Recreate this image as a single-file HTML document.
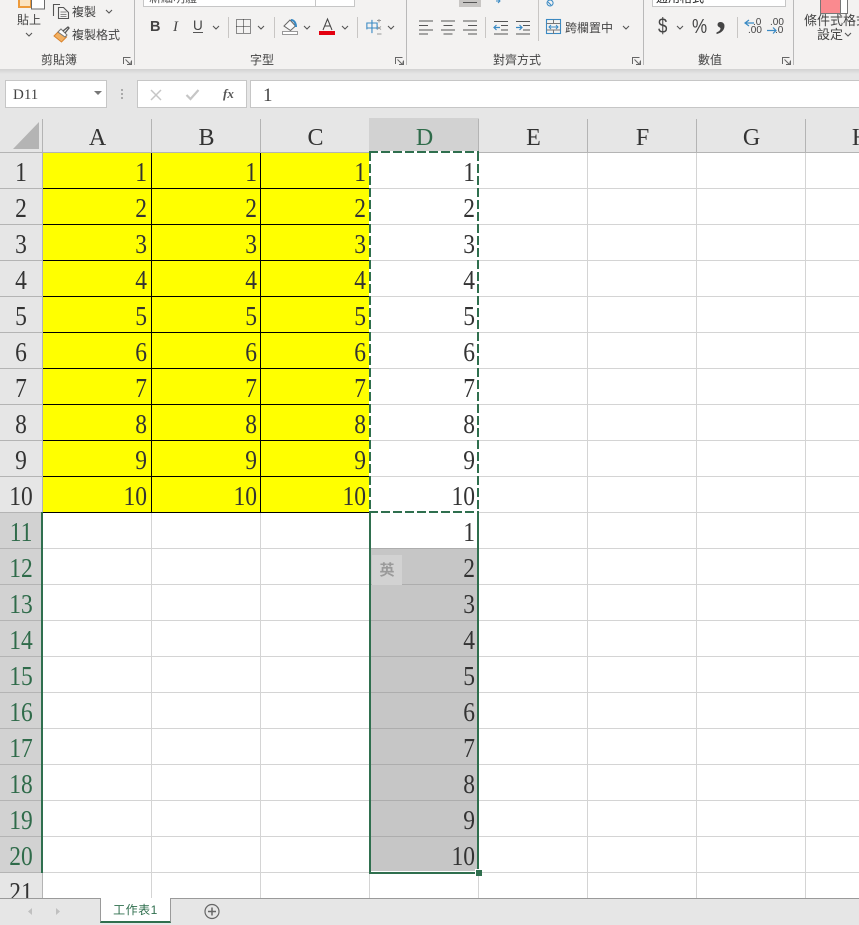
<!DOCTYPE html>
<html><head><meta charset="utf-8"><style>
html,body{margin:0;padding:0;width:859px;height:925px;overflow:hidden;background:#fff}
*{box-sizing:border-box}
.a{position:absolute}
#root{position:relative;width:859px;height:925px;overflow:hidden;font-family:"Liberation Sans","Noto Sans CJK TC",sans-serif;color:#444}
.t{position:absolute;font-size:12px;line-height:14px;white-space:nowrap;color:#444}
.col{position:absolute;top:152px;font:27px/36px "Liberation Serif",serif;text-align:right;color:#333;padding-top:2px;transform:scaleX(.87);transform-origin:100% 0}
.rh{transform-origin:50% 0}
.hd{position:absolute;top:119px;height:33px;text-align:center;font:24px/38px "Liberation Serif",serif;color:#333;width:109px}
.sep{position:absolute;width:1px;background:#c8c6c4}
svg{position:absolute;overflow:visible}
</style></head><body><div id="root">

<!-- ribbon -->
<div class="a" style="left:0;top:0;width:859px;height:69px;background:#f3f2f1"></div>
<div class="a" style="left:0;top:69px;width:859px;height:49px;background:#e6e6e6"></div>
<div class="a" style="left:0;top:69px;width:859px;height:5px;background:linear-gradient(#d2d2d2,#e6e6e6)"></div>

<div class="sep" style="left:134px;top:0;height:65px;background:#b9b9b9"></div>
<div class="sep" style="left:406px;top:0;height:65px;background:#b9b9b9"></div>
<div class="sep" style="left:643px;top:0;height:65px;background:#b9b9b9"></div>
<div class="sep" style="left:793px;top:0;height:65px;background:#b9b9b9"></div>
<div class="sep" style="left:228px;top:17px;height:21px"></div>
<div class="sep" style="left:274px;top:17px;height:21px"></div>
<div class="sep" style="left:357px;top:17px;height:21px"></div>
<div class="sep" style="left:485px;top:17px;height:21px"></div>
<div class="sep" style="left:538px;top:0;height:41px"></div>
<div class="sep" style="left:737px;top:17px;height:21px"></div>

<!-- paste / clipboard -->
<svg style="left:0;top:0" width="140" height="50" fill="none">
<path d="M19 -2V7H31V-2Z" stroke="#ed9a3a" stroke-width="2" fill="#fbe3c0"/>
<rect x="31.500" y="-2" width="13" height="11" fill="#fff" stroke="#6a6a6a"/>
<path d="M26 33l3 3 3-3" stroke="#555" stroke-width="1.100"/>
<path d="M53.500 16V4.500H60M58.500 7.500H63.500l5 5V18.500H58.500Z" stroke="#555" stroke-width="1.100"/>
<path d="M60.500 12h6M60.500 14.500h6M60.500 16.500h6" stroke="#666" stroke-width=".8"/>
<path d="M106 10l3 3 3-3" stroke="#555" stroke-width="1.100"/>
<path d="M54 36l6-6 6.500 7-5 5Z" fill="#f3b061" stroke="#d9822b"/>
<path d="M58 32l3-3 6 6-2 2Z" fill="#fff" stroke="#777"/>
<path d="M63 31l5-4 1 1-4 5" stroke="#555" stroke-width="1.300"/>
</svg>
<div class="t" style="left:17px;top:13px">貼上</div>
<div class="t" style="left:72px;top:5px">複製</div>
<div class="t" style="left:72px;top:28px">複製格式</div>
<div class="t" style="left:41px;top:53px">剪貼簿</div>
<div class="t" style="left:250px;top:53px">字型</div>
<div class="t" style="left:493px;top:53px">對齊方式</div>
<div class="t" style="left:698px;top:53px">數值</div>

<!-- dialog launchers -->
<svg style="left:0;top:0" width="859" height="69" fill="none" stroke="#666">
<path d="M123.500 64V57.500H130.500M131.500 60.500V64.500H127M125.500 59.500l5 5M128 64.500h3v-3"/>
<path d="M395.500 64V57.500H402.500M403.500 60.500V64.500H399M397.500 59.500l5 5M400 64.500h3v-3"/>
<path d="M632.500 64V57.500H639.500M640.500 60.500V64.500H636M634.500 59.500l5 5M637 64.500h3v-3"/>
<path d="M782.500 64V57.500H789.500M790.500 60.500V64.500H786M784.500 59.500l5 5M787 64.500h3v-3"/>
</svg>

<!-- font boxes -->
<div class="a" style="left:143px;top:-2px;width:173px;height:9px;background:#fff;border:1px solid #c6c6c6;overflow:hidden"><div class="t" style="left:5px;top:-8px;color:#555">新細明體</div></div>
<div class="a" style="left:315px;top:-2px;width:40px;height:9px;background:#fff;border:1px solid #c6c6c6"></div>
<div class="a" style="left:652px;top:-2px;width:134px;height:9px;background:#fff;border:1px solid #c6c6c6;overflow:hidden"><div class="t" style="left:3px;top:-8px;color:#222">通用格式</div></div>

<!-- font row -->
<div class="a" style="left:150px;top:17px;font:bold 14.500px/20px 'Liberation Sans',sans-serif;color:#444">B</div>
<div class="a" style="left:173px;top:17px;font:italic 15px/20px 'Liberation Serif',serif;color:#444">I</div>
<div class="a" style="left:193px;top:16px;font:13.500px/20px 'Liberation Sans',sans-serif;color:#444">U</div>
<svg style="left:0;top:0" width="859" height="69" fill="none" stroke="#555">
<path d="M193 32.500h10"/>
<path d="M213 26l3 3 3-3M258 26l3 3 3-3M304 26l3 3 3-3M342 26l3 3 3-3M388 26l3 3 3-3M623 26l3 3 3-3M677 26l3 3 3-3" stroke-width="1.100"/>
<path d="M236.500 19.500h14v14h-14ZM243.500 19.500v14M236.500 26.500h14" stroke="#222" stroke-dasharray="1 1" shape-rendering="crispEdges"/>
<path d="M284 26l6-6 5.500 6-5 4.500Z" fill="#f8f8f8" stroke="#666"/>
<path d="M291 20c3 0 5 3 5 7" stroke="#3a8ac4" stroke-width="2"/>
<rect x="282.500" y="31.500" width="15" height="3" fill="#fff" stroke="#999"/>
<path d="M323 30l4.500-11 4.500 11M324.500 26h6" stroke="#444"/>
<rect x="319" y="31" width="16" height="4" fill="#e3000f" stroke="none"/>
<path d="M377 20.500h4M377 26.500l4 3M381 26.500l-4 3M379 19v3.500M377 34h4.500" stroke="#999"/>

<path d="M419 21h14M419 25.500h9M419 30h14M419 34h9" stroke="#555"/>
<path d="M441 21h14M443.500 25.500h9M441 30h14M443.500 34h9" stroke="#555"/>
<path d="M463 21h14M468 25.500h9M463 30h14M468 34h9" stroke="#555"/>
<path d="M494 21.500h14M501 25.500h7M501 30h7M494 34h14" stroke="#555"/>
<path d="M494 27.500h6M496.500 25L494 27.500l2.500 2.500" stroke="#3a8ac4" stroke-width="1.200"/>
<path d="M516 21.500h14M523 25.500h7M523 30h7M516 34h14" stroke="#555"/>
<path d="M516 27.500h6M519.500 25L522 27.500l-2.500 2.500" stroke="#3a8ac4" stroke-width="1.200"/>
<rect x="546.500" y="19.500" width="14" height="14" stroke="#3a8ac4" stroke-width="1.100"/>
<path d="M546.500 23.500h14M546.500 30h14M553.500 19.500v4M553.500 30v4" stroke="#777"/>
<path d="M549 27h9M551 25l-2 2 2 2M556 25l2 2-2 2" stroke="#3a8ac4"/>

<path d="M459 -1h22v8h-22Z" fill="#c8c6c4" stroke="none"/>
<path d="M463 2.500h14" stroke="#555"/>
<path d="M496 1h4M498 -1l2 2-2 2" stroke="#3a8ac4"/>
<path d="M548 2l3 3M550 0a3 3 0 1 0 0.100 0" stroke="#3a8ac4"/>

<path d="M745 23h9M749 20l-4 3 4 3" stroke="#3a8ac4" stroke-width="1.200"/>
<path d="M767 30.500h9M773 27.500l3 3-3 3" stroke="#3a8ac4" stroke-width="1.200"/>
</svg>
<div class="a" style="left:365px;top:18px;font:14px/18px 'Noto Sans CJK TC',sans-serif;color:#3a8ac4">中</div>
<div class="a" style="left:658px;top:14px;font:21px/25px 'Liberation Sans',sans-serif;color:#444;transform:scaleX(.8);transform-origin:0 0">$</div>
<div class="a" style="left:692px;top:15px;font:20px/24px 'Liberation Sans',sans-serif;color:#444;transform:scaleX(.85);transform-origin:0 0">%</div>
<div class="a" style="left:716px;top:-5px;font:bold 40px/40px 'Liberation Serif',serif;color:#444">,</div>
<div class="a" style="left:753px;top:18px;font:10px/10px 'Liberation Sans',sans-serif;color:#444">.0</div>
<div class="a" style="left:748px;top:26px;font:10px/10px 'Liberation Sans',sans-serif;color:#444">.00</div>
<div class="a" style="left:770px;top:18px;font:10px/10px 'Liberation Sans',sans-serif;color:#444">.00</div>
<div class="a" style="left:775px;top:26px;font:10px/10px 'Liberation Sans',sans-serif;color:#444">.0</div>
<div class="t" style="left:565px;top:21px">跨欄置中</div>

<!-- conditional format -->
<div class="a" style="left:820px;top:-2px;width:28px;height:16px;background:#fff;border:1px solid #777"></div>
<div class="a" style="left:821px;top:-2px;width:19px;height:15px;background:#fa8a8f"></div>
<div class="a" style="left:840px;top:-2px;width:1px;height:16px;background:#777"></div>
<div class="t" style="left:804px;top:14px;font-size:13px">條件式格式</div>
<div class="t" style="left:817px;top:28px;font-size:13px">設定</div>
<svg style="left:0;top:0" width="859" height="69" fill="none"><path d="M845 33l3 3 3-3" stroke="#555" stroke-width="1.100"/></svg>

<!-- formula bar -->
<div class="a" style="left:5px;top:80px;width:102px;height:28px;background:#fff;border:1px solid #c6c6c6;font:15px/28px 'Liberation Serif',serif;color:#444;padding-left:7px">D11</div>
<div class="a" style="left:94px;top:91px;width:0;height:0;border-left:4px solid transparent;border-right:4px solid transparent;border-top:4px solid #777"></div>
<div class="a" style="left:121px;top:89px;width:2px;height:11px;background:repeating-linear-gradient(#aaa 0 2px,transparent 2px 4px)"></div>
<div class="a" style="left:137px;top:80px;width:110px;height:28px;background:#fff;border:1px solid #c6c6c6"></div>
<div class="a" style="left:250px;top:80px;width:620px;height:28px;background:#fff;border:1px solid #c6c6c6;font:19px/29px 'Liberation Serif',serif;color:#444;padding-left:12px">1</div>
<svg style="left:0;top:0" width="300" height="115" fill="none">
<path d="M151 90l10 10M161 90l-10 10" stroke="#c6c6c6" stroke-width="1.500"/>
<path d="M186.500 95l4 4 8-9" stroke="#c6c6c6" stroke-width="2.200"/>
</svg>
<div class="a" style="left:223px;top:86px;font:italic bold 13px/16px 'Liberation Serif',serif;color:#555">fx</div>

<!-- headers -->
<div class="a" style="left:0;top:118px;width:859px;height:34px;background:#e6e6e6"></div>
<div class="a" style="left:0;top:152px;width:43px;height:746px;background:#e6e6e6"></div>
<div class="a" style="left:369px;top:118px;width:110px;height:34px;background:#d2d2d2"></div>
<div class="a" style="left:0;top:512px;width:42px;height:361px;background:#d2d2d2"></div>
<svg style="left:0;top:0" width="50" height="160"><path d="M13 149L39 122V149Z" fill="#b4b4b4"/></svg>
<div class="hd" style="left:43px">A</div>
<div class="hd" style="left:152px">B</div>
<div class="hd" style="left:261px">C</div>
<div class="hd" style="left:370px;color:#2f6b4a">D</div>
<div class="hd" style="left:479px">E</div>
<div class="hd" style="left:588px">F</div>
<div class="hd" style="left:697px">G</div>
<div class="hd" style="left:806px">H</div>

<!-- yellow -->
<div class="a" style="left:43px;top:153px;width:327px;height:360px;background:#ff0"></div>

<!-- selected fill -->
<div class="a" style="left:371px;top:549px;width:106px;height:322px;background:#c6c6c6"></div>

<!-- grid -->
<svg style="left:0;top:0" width="859" height="925" fill="none" shape-rendering="crispEdges">
<path stroke="#d4d4d4" d="M0 188.500H859M0 224.500H859M0 260.500H859M0 296.500H859M0 332.500H859M0 368.500H859M0 404.500H859M0 440.500H859M0 476.500H859M0 512.500H859M0 548.500H859M0 584.500H859M0 620.500H859M0 656.500H859M0 692.500H859M0 728.500H859M0 764.500H859M0 800.500H859M0 836.500H859M0 872.500H859" />
<path stroke="#d4d4d4" d="M151.500 153V898M260.500 153V898M369.500 153V898M478.500 153V898M587.500 153V898M696.500 153V898M805.500 153V898"/>
<path stroke="#b4b4b4" d="M0 188.500H42M0 224.500H42M0 260.500H42M0 296.500H42M0 332.500H42M0 368.500H42M0 404.500H42M0 440.500H42M0 476.500H42M0 512.500H42M0 548.500H42M0 584.500H42M0 620.500H42M0 656.500H42M0 692.500H42M0 728.500H42M0 764.500H42M0 800.500H42M0 836.500H42M0 872.500H42"/>
<path stroke="#b4b4b4" d="M42.500 119V898M151.500 119V152M260.500 119V152M478.500 119V152M587.500 119V152M696.500 119V152M805.500 119V152M0 152.500H859"/>
<path stroke="#000" d="M43 188.500H370M43 224.500H370M43 260.500H370M43 296.500H370M43 332.500H370M43 368.500H370M43 404.500H370M43 440.500H370M43 476.500H370M43 512.500H370M151.500 153V513M260.500 153V513"/>
<path stroke="#adadad" d="M371 548.500H477M371 584.500H477M371 620.500H477M371 656.500H477M371 692.500H477M371 728.500H477M371 764.500H477M371 800.500H477M371 836.500H477"/>
</svg>

<!-- numbers -->
<div class="col" style="left:43px;width:104px">1<br>2<br>3<br>4<br>5<br>6<br>7<br>8<br>9<br>10</div>
<div class="col" style="left:152px;width:105px">1<br>2<br>3<br>4<br>5<br>6<br>7<br>8<br>9<br>10</div>
<div class="col" style="left:261px;width:105px">1<br>2<br>3<br>4<br>5<br>6<br>7<br>8<br>9<br>10</div>
<div class="col" style="left:370px;width:105px">1<br>2<br>3<br>4<br>5<br>6<br>7<br>8<br>9<br>10<br>1<br>2<br>3<br>4<br>5<br>6<br>7<br>8<br>9<br>10</div>
<div class="col rh" style="left:0;width:42px;text-align:center;color:#333">1<br>2<br>3<br>4<br>5<br>6<br>7<br>8<br>9<br>10</div>
<div class="col rh" style="left:0;top:512px;width:42px;text-align:center;color:#2f6b4a">11<br>12<br>13<br>14<br>15<br>16<br>17<br>18<br>19<br>20</div>
<div class="col rh" style="left:0;top:872px;width:42px;height:26px;overflow:hidden;text-align:center;color:#333">21</div>

<!-- IME badge -->
<div class="a" style="left:372px;top:555px;width:30px;height:30px;background:#d2d2d2;color:#9a9a9a;font:bold 15px/30px 'Noto Sans CJK TC',sans-serif;text-align:center">英</div>

<!-- selection borders -->
<svg style="left:0;top:0" width="859" height="925" fill="none" shape-rendering="crispEdges">
<path d="M42 512V873" stroke="#2f6f4e" stroke-width="2"/>
<path d="M369 152H479" stroke="#fff" stroke-width="2"/>
<path d="M369 152H479" stroke="#2f6f4e" stroke-width="2" stroke-dasharray="9 3"/>
<path d="M370 152V512M478 152V512" stroke="#fff" stroke-width="2"/>
<path d="M370 152V512M478 152V512" stroke="#2f6f4e" stroke-width="2" stroke-dasharray="9 3"/>
<path d="M370 512V873H478V512" stroke="#2f6f4e" stroke-width="2"/>
<path d="M369 512H479" stroke="#fff" stroke-width="2"/>
<path d="M369 512H479" stroke="#2f6f4e" stroke-width="2" stroke-dasharray="9 3"/>
<rect x="475" y="869" width="7" height="7" fill="#fff"/>
<rect x="476" y="870" width="6" height="6" fill="#2f6f4e"/>
</svg>

<!-- sheet tabs -->
<div class="a" style="left:0;top:898px;width:859px;height:27px;background:#e6e6e6;border-top:1px solid #9a9a9a"></div>
<div class="a" style="left:100px;top:898px;width:71px;height:25px;background:#fff;border-left:1px solid #9a9a9a;border-right:1px solid #9a9a9a;border-bottom:2px solid #2f6f4e;color:#2f6f4e;font-size:12px;line-height:24px;text-align:center;letter-spacing:.5px">工作表1</div>
<svg style="left:0;top:0" width="240" height="925" fill="none">
<path d="M32 908l-4 3.500 4 3.500Z" fill="#c0c0c0"/>
<path d="M56 908l4 3.500-4 3.500Z" fill="#c0c0c0"/>
<circle cx="212" cy="911.500" r="7" stroke="#666" stroke-width="1.200"/>
<path d="M208 911.500h8M212 907.500v8" stroke="#666" stroke-width="1.500"/>
</svg>
</div></body></html>
